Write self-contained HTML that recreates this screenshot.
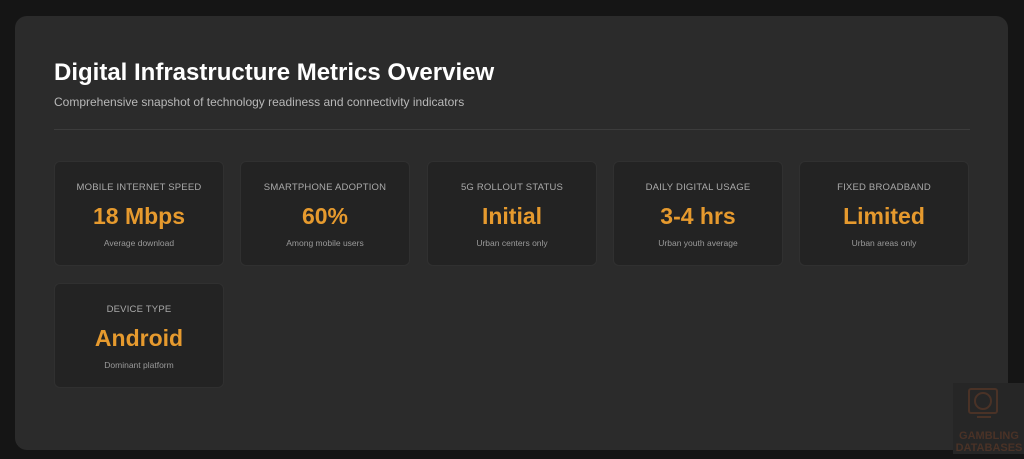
<!DOCTYPE html>
<html><head><style>
body{margin:0;width:1024px;height:454px;background:#151515;font-family:"Liberation Sans",sans-serif;overflow:hidden;position:relative}
.panel{position:absolute;left:15px;top:16px;width:993px;height:434px;background:#2b2b2b;border-radius:12px}
h1{position:absolute;margin:0;font-size:24px;font-weight:bold;color:#fff;letter-spacing:0px}
.sub{position:absolute;font-size:12px;color:#b8b8b8}
.hr{position:absolute;top:129px;width:916px;height:1px;background:#3c3c3c}
.card{position:absolute;width:170px;height:105px;background:#232323;border:1px solid #303030;border-radius:6px;box-sizing:border-box;text-align:center}
.l{position:absolute;top:20px;width:100%;font-size:9.5px;color:#aaa;letter-spacing:.2px}
.v{position:absolute;top:41px;width:100%;font-size:23px;font-weight:bold;color:#e69a2e}
.s{position:absolute;top:76px;width:100%;font-size:8.5px;color:#9a9a9a}
.wm{position:absolute;left:953px;top:383px;width:71px;height:71px;background:#262626}
</style></head><body>
<div class="panel"></div>
<h1 style="left:54px;top:59px">Digital Infrastructure Metrics Overview</h1>
<div class="sub" style="left:54px;top:95px">Comprehensive snapshot of technology readiness and connectivity indicators</div>
<div class="hr" style="left:54px"></div>
<div class="card" style="left:54px;top:161px"><div class="l">MOBILE INTERNET SPEED</div><div class="v">18 Mbps</div><div class="s">Average download</div></div>
<div class="card" style="left:240px;top:161px"><div class="l">SMARTPHONE ADOPTION</div><div class="v">60%</div><div class="s">Among mobile users</div></div>
<div class="card" style="left:427px;top:161px"><div class="l">5G ROLLOUT STATUS</div><div class="v">Initial</div><div class="s">Urban centers only</div></div>
<div class="card" style="left:613px;top:161px"><div class="l">DAILY DIGITAL USAGE</div><div class="v">3-4 hrs</div><div class="s">Urban youth average</div></div>
<div class="card" style="left:799px;top:161px"><div class="l">FIXED BROADBAND</div><div class="v">Limited</div><div class="s">Urban areas only</div></div>
<div class="card" style="left:54px;top:283px"><div class="l">DEVICE TYPE</div><div class="v">Android</div><div class="s">Dominant platform</div></div>
<div class="wm">
<svg width="71" height="71" viewBox="0 0 71 71"><rect x="16" y="6" width="28" height="24" rx="2" fill="none" stroke="#4a3226" stroke-width="2"/><circle cx="30" cy="18" r="8" fill="none" stroke="#4a3226" stroke-width="2"/><rect x="24" y="33" width="14" height="2" fill="#4a3226"/>
<text x="36" y="56" font-size="11" font-weight="bold" fill="#4a3226" text-anchor="middle" font-family="Liberation Sans">GAMBLING</text>
<text x="36" y="68" font-size="11" font-weight="bold" fill="#4a3226" text-anchor="middle" font-family="Liberation Sans">DATABASES</text></svg>
</div>
</body></html>
